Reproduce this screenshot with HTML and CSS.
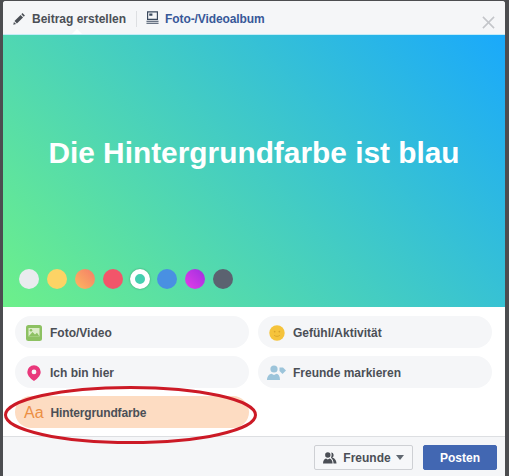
FILE: index.html
```html
<!DOCTYPE html>
<html lang="de">
<head>
<meta charset="utf-8">
<title>Beitrag erstellen</title>
<link rel="stylesheet" href="styles.css">
</head>
<body>
<main class="card">
  <header class="tabs">
    <div class="tab tab-active">
      <svg class="tab-icon" viewBox="0 0 14 14"><path fill="#4b4f56" d="M10.2 1.2l2.6 2.6-1.2 1.2L9 2.4zM8.2 3.2l2.6 2.6-6.6 6.6-2.6-2.6zM1 10.7l2.3 2.3-3 .8z"/></svg>
      <span>Beitrag erstellen</span>
    </div>
    <span class="tab-sep"></span>
    <div class="tab tab-link">
      <svg class="tab-icon album" viewBox="0 0 13 14"><path fill="none" stroke="#3b4a5e" stroke-width="1.3" d="M1.2.9h10.6v8.2H1.2z"/><path fill="#3b4a5e" d="M3 2.6h3.4v2.6H3zM0 10.5h13v1.1H0zM0 12.6h13v1.1H0z"/></svg>
      <span>Foto-/Videoalbum</span>
    </div>
    <svg class="close" viewBox="0 0 14 14"><path stroke="#c4c6ca" stroke-width="1.7" d="M1 1l12 12M13 1L1 13"/></svg>
  </header>

  <section class="canvas">
    <h1 class="headline">Die Hintergrundfarbe ist blau</h1>
    <div class="swatches">
      <span class="swatch s1"></span>
      <span class="swatch s2"></span>
      <span class="swatch s3"></span>
      <span class="swatch s4"></span>
      <span class="swatch s5"></span>
      <span class="swatch s6"></span>
      <span class="swatch s7"></span>
      <span class="swatch s8"></span>
    </div>
  </section>

  <section class="options">
    <div class="chip">
      <svg class="chip-icon" viewBox="0 0 16 16"><rect width="16" height="16" rx="2.5" fill="#8dc162"/><path fill="#dcecc9" d="M2.5 3h11v8.5H2.5z"/><path fill="#8dc162" d="M2.5 11.5l4-4.5 2.5 2.5 2-1.8 2.500 3.800z"/><circle cx="5" cy="5.2" r="1.3" fill="#8dc162"/></svg>
      <span>Foto/Video</span>
    </div>
    <div class="chip">
      <svg class="chip-icon" viewBox="0 0 17 17"><circle cx="8.5" cy="8.5" r="8.2" fill="#f5c33b"/><circle cx="6" cy="7" r=".9" fill="#d9a32a"/><circle cx="11" cy="7" r=".9" fill="#d9a32a"/><path d="M5.500 11c1.800 1.400 4.200 1.400 6 0" fill="none" stroke="#d9a32a"/></svg>
      <span>Gefühl/Aktivität</span>
    </div>
    <div class="chip">
      <svg class="chip-icon" viewBox="0 0 16 16"><path fill-rule="evenodd" fill="#e9387b" d="M8 0.2a6.7 6.7 0 0 1 6.7 6.7C14.7 11 10.5 14 8 16 5.500 14 1.300 11 1.300 6.900A6.700 6.700 0 0 1 8 .2zm0 4.300a2.400 2.400 0 1 0 0 4.800 2.400 2.400 0 0 0 0-4.800z"/></svg>
      <span>Ich bin hier</span>
    </div>
    <div class="chip">
      <svg class="chip-icon tag-icon" viewBox="0 0 19 16"><g fill="#9cc4da"><circle cx="7" cy="4" r="3.600"/><path d="M0 15c0-4 2.500-6 4.500-6.300L7 10l2.500-1.300c2 .3 3.500 2.300 3.500 6.300z"/><path d="M12.500 2.500h3.500l3 3-3.500 3.500-3-3z"/></g></svg>
      <span>Freunde markieren</span>
    </div>
    <div class="chip chip-active">
      <span class="aa">Aa</span>
      <span class="chip-label-tight">Hintergrundfarbe</span>
    </div>
  </section>

  <footer class="actions">
    <button class="btn btn-audience" type="button">
      <svg class="people" viewBox="0 0 14 12"><g fill="#4b4f56"><circle cx="4.800" cy="3" r="2.700"/><path d="M0 11.500c0-3 1.500-4.500 3-5l1.800 1 1.800-1c1.500.5 3 2 3 5z"/><path d="M8.200.5a2.700 2.700 0 0 1 1 5.100c1.600.6 4.300 1.900 4.300 5.900h-3c0-3-1-4.700-2.500-5.800.6-1.500.9-3.600.2-5.200z"/></g></svg>
      <span>Freunde</span>
      <span class="caret"></span>
    </button>
    <button class="btn btn-post" type="button">Posten</button>
  </footer>
</main>
<svg class="circle-mark" viewBox="0 0 257 60"><ellipse cx="129.500" cy="30" rx="125" ry="27.500" fill="none" stroke="#cc1a26" stroke-width="3"/></svg>
</body>
</html>
```

FILE: styles.css
```css
* { box-sizing: border-box; }
html, body { height: 100%; }
body {
  margin: 0;
  padding: 1px 4px 0 3px;
  background: #4c4d50;
  font-family: "Liberation Sans", Arial, sans-serif;
  overflow: hidden;
  position: relative;
}
.card {
  height: 475px;
  background: #fff;
  border-radius: 3px 3px 0 0;
  display: flex;
  flex-direction: column;
  overflow: hidden;
}
.tabs {
  height: 33px;
  flex: none;
  background: #f5f6f8;
  display: flex;
  align-items: center;
  padding: 2px 10px 0 10px;
  position: relative;
  font-size: 12px;
  font-weight: bold;
}
.tabs::after {
  content: "";
  position: absolute;
  left: 69px;
  bottom: 0;
  border: 5px solid transparent;
  border-top: 0;
  border-bottom-color: #fff;
}
.tab { display: flex; align-items: center; gap: 6px; }
.tab-active { color: #4b4f56; }
.tab-link { color: #385898; letter-spacing: -.1px; }
.tab-icon { width: 13px; height: 13px; flex: none; }
.album { margin-top: -3px; }
.tab-sep { width: 1px; height: 16px; background: #dddfe2; margin: 0 9px 0 10px; }
.close { width: 13px; height: 13px; margin-left: auto; margin-top: 8px; }
.canvas {
  height: 273px;
  flex: none;
  border-top: 1px solid #c4ecf7;
  background: linear-gradient(45deg, #6df08a 0%, #1aa9fb 100%);
  display: flex;
  flex-direction: column;
  padding: 0 0 18px 16px;
}
.headline {
  margin: 100px 0 0 -16px;
  color: #fff;
  font-size: 29.85px;
  line-height: 36px;
  font-weight: bold;
  text-align: center;
}
.swatches { margin-top: auto; display: flex; gap: 8px; align-items: center; }
.swatch { width: 20px; height: 20px; border-radius: 50%; flex: none; }
.s1 { background: #e9ebee; }
.s2 { background: #fdd365; }
.s3 { background: linear-gradient(45deg, #fcb860, #f57d68); }
.s4 { background: #f2556a; }
.s5 { background: #45cfb0; border: 5px solid #fff; box-shadow: 0 0 2px rgba(0,0,0,.35); margin: 0 -1px; }
.s6 { background: #4990e2; }
.s7 { background: linear-gradient(45deg, #e53ee8, #9f2fe0); }
.s8 { background: #5b6270; }
.options {
  flex: 1;
  display: grid;
  grid-template-columns: 234px 234px;
  grid-auto-rows: 32px;
  column-gap: 9px;
  row-gap: 8px;
  padding: 9px 0 0 12px;
}
.chip {
  background: #f5f6f8;
  border-radius: 16px;
  display: flex;
  align-items: center;
  gap: 8px;
  padding: 1px 0 0 11px;
  font-size: 12px;
  font-weight: bold;
  color: #4b4f56;
}
.chip-icon { width: 16px; height: 16px; flex: none; }
.tag-icon { width: 19px; margin-left: -2px; margin-right: -1px; }
.chip-active { background: #fddcc2; padding-left: 9px; gap: 7px; }
.chip-label-tight { letter-spacing: -.15px; }
.aa { color: #ec8f43; font-size: 16px; font-weight: normal; line-height: 1; }
.actions {
  height: 40px;
  flex: none;
  border-top: 1px solid #dddfe2;
  background: #f5f6f8;
  display: flex;
  justify-content: flex-end;
  align-items: flex-start;
  gap: 10px;
  padding: 8px 8px 0 0;
}
.btn {
  height: 25px;
  font: bold 12px "Liberation Sans", Arial, sans-serif;
  border-radius: 2px;
  padding: 0;
  display: flex;
  align-items: center;
  justify-content: center;
}
.btn-audience {
  width: 99px;
  background: #f6f7f9;
  border: 1px solid #ced0d4;
  color: #4b4f56;
  gap: 6px;
}
.people { width: 14px; height: 12px; }
.caret {
  width: 0;
  height: 0;
  border: 4.500px solid transparent;
  border-top: 5px solid #606770;
  border-bottom: 0;
  margin-left: -1px;
}
.btn-post {
  width: 74px;
  background: #4267b2;
  border: 1px solid #4267b2;
  color: #fff;
}
.circle-mark {
  position: absolute;
  left: 1px;
  top: 385px;
  width: 257px;
  height: 60px;
}
```
